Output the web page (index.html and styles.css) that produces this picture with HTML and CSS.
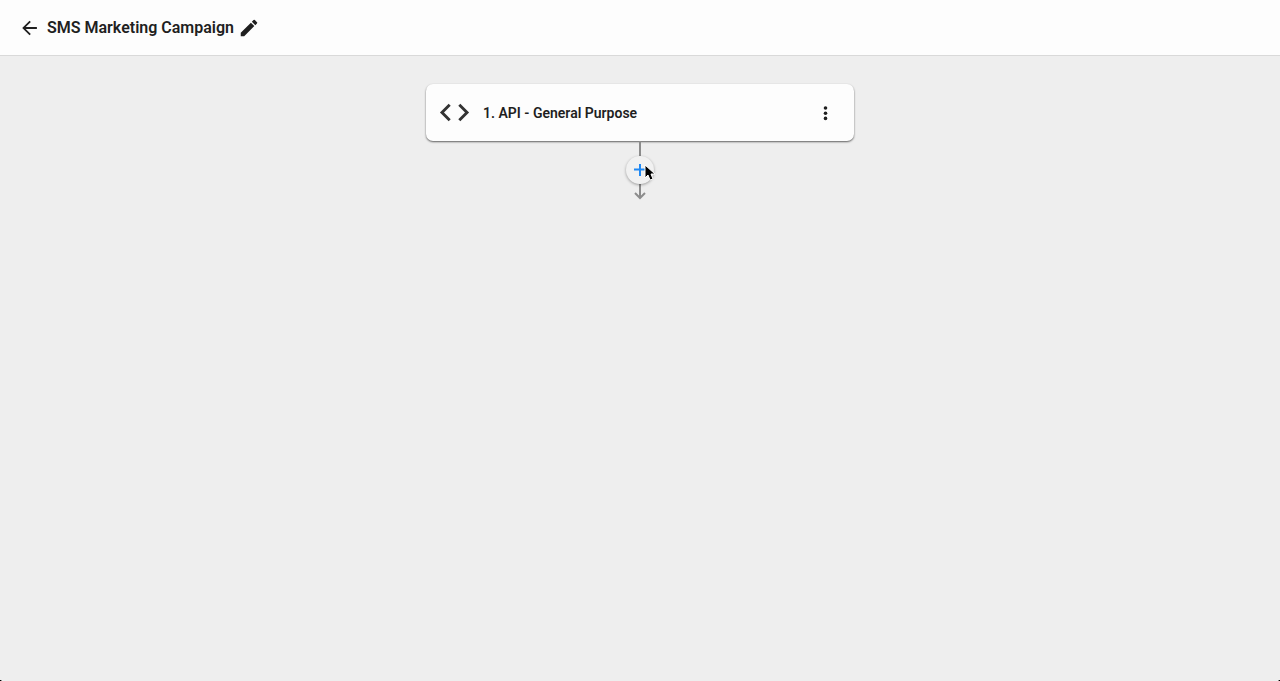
FILE: index.html
```html
<!DOCTYPE html>
<html lang="en">
<head>
<meta charset="utf-8">
<meta name="viewport" content="width=device-width, initial-scale=1">
<title>SMS Marketing Campaign</title>
<link rel="stylesheet" href="styles.css">
</head>
<body>
<div class="app">
  <header class="topbar">
    <button class="icon-button" type="button" aria-label="Back">
      <svg class="icon" viewBox="0 0 24 24"><path d="M20.6 11H8.4l5.6-5.6L12.6 4l-8 8 8 8 1.4-1.4L8.4 13h12.2z"/></svg>
    </button>
    <h1 class="title">SMS Marketing Campaign</h1>
    <button class="icon-button" type="button" aria-label="Rename campaign">
      <svg class="icon" viewBox="0 0 24 24"><path d="M3 17.25V21h3.75L17.81 9.94l-3.75-3.75zM20.71 7.04a1 1 0 0 0 0-1.41l-2.34-2.34a1 1 0 0 0-1.41 0l-1.83 1.83 3.75 3.75z"/></svg>
    </button>
  </header>
  <main class="flow">
    <section class="step">
      <svg class="step-icon" viewBox="0 0 24 24"><path d="M9.4 16.6 4.8 12l4.6-4.6L8 6l-6 6 6 6zm5.2 0 4.6-4.6-4.6-4.6L16 6l6 6-6 6z"/></svg>
      <h2 class="step-name">1. API - General Purpose</h2>
      <button class="icon-button" type="button" aria-label="Step options">
        <svg class="dots" viewBox="0 0 20 20"><circle cx="9.5" cy="5" r="1.8"/><circle cx="9.5" cy="10.2" r="1.8"/><circle cx="9.5" cy="15.4" r="1.8"/></svg>
      </button>
    </section>
    <div class="connector">
      <span class="line"></span>
      <button class="add" type="button" aria-label="Add step">
        <svg class="plus" viewBox="0 0 12 12"><path d="M6 0v12M0 5.5h12"/></svg>
        <svg class="cursor" viewBox="0 0 12 18"><path d="M1 1v13l3-3 2 5 3-1-2-5h4z"/></svg>
      </button>
      <svg class="arrow" viewBox="0 0 14 16"><path d="M7 0v14M2 9l5 5 5-5"/></svg>
    </div>
  </main>
  <span class="corner corner-left"></span>
  <span class="corner corner-right"></span>
</div>
</body>
</html>
```
FILE: styles.css
```css
* {
  box-sizing: border-box;
}

body {
  margin: 0;
  font-family: Roboto, "Liberation Sans", sans-serif;
  color: #1f1f1f;
  background: #eee;
}

button {
  padding: 0;
  border: 0;
  color: inherit;
  cursor: pointer;
}

.app {
  position: relative;
  display: flex;
  flex-direction: column;
  min-height: 100vh;
}

.topbar {
  display: flex;
  align-items: center;
  height: 56px;
  padding: 0 18px;
  gap: 4px;
  background: #fdfdfd;
  border-bottom: 1px solid #d9d9d9;
}

.icon-button {
  display: flex;
  background: none;
}

.icon {
  width: 22px;
  height: 22px;
  fill: currentColor;
}

.title {
  margin: 0 0 0 3px;
  font-size: 16px;
  line-height: 24px;
  font-weight: 600;
}

.flow {
  display: flex;
  flex: 1;
  flex-direction: column;
  align-items: center;
  padding: 28px 16px;
}

.step {
  display: flex;
  align-items: center;
  gap: 11px;
  width: 100%;
  max-width: 428px;
  height: 57px;
  padding: 0 18px 0 11px;
  background: #fdfdfd;
  border-radius: 7px;
  box-shadow: 0 1px 2px rgba(0, 0, 0, 0.6);
}

.step-icon {
  width: 35px;
  height: 35px;
  fill: #333;
}

.step-name {
  flex: 1;
  margin: 0;
  font-size: 14px;
  line-height: 20px;
  font-weight: 600;
}

.dots {
  width: 20px;
  height: 20px;
  fill: currentColor;
}

.connector {
  display: flex;
  flex-direction: column;
  align-items: center;
}

.line {
  width: 2px;
  height: 15px;
  background: #8c8c8c;
}

.add {
  position: relative;
  display: grid;
  place-items: center;
  width: 28px;
  height: 28px;
  border-radius: 50%;
  background: #f1f1f1;
  box-shadow: 0 1px 3px rgba(0, 0, 0, 0.35);
}

.plus {
  width: 12px;
  height: 12px;
  stroke: #2189f3;
  stroke-width: 2;
}

.cursor {
  position: absolute;
  top: 8px;
  left: 18px;
  width: 12px;
  height: 18px;
  fill: #000;
  stroke: #fff;
}

.arrow {
  width: 14px;
  height: 16px;
  fill: none;
  stroke: #8c8c8c;
  stroke-width: 2;
}

.corner {
  position: absolute;
  bottom: 0;
  width: 4px;
  height: 2px;
}

.corner-left {
  left: 0;
  background: radial-gradient(ellipse at top right, transparent 65%, #000 75%);
}

.corner-right {
  right: 0;
  background: radial-gradient(ellipse at top left, transparent 65%, #000 75%);
}
```
